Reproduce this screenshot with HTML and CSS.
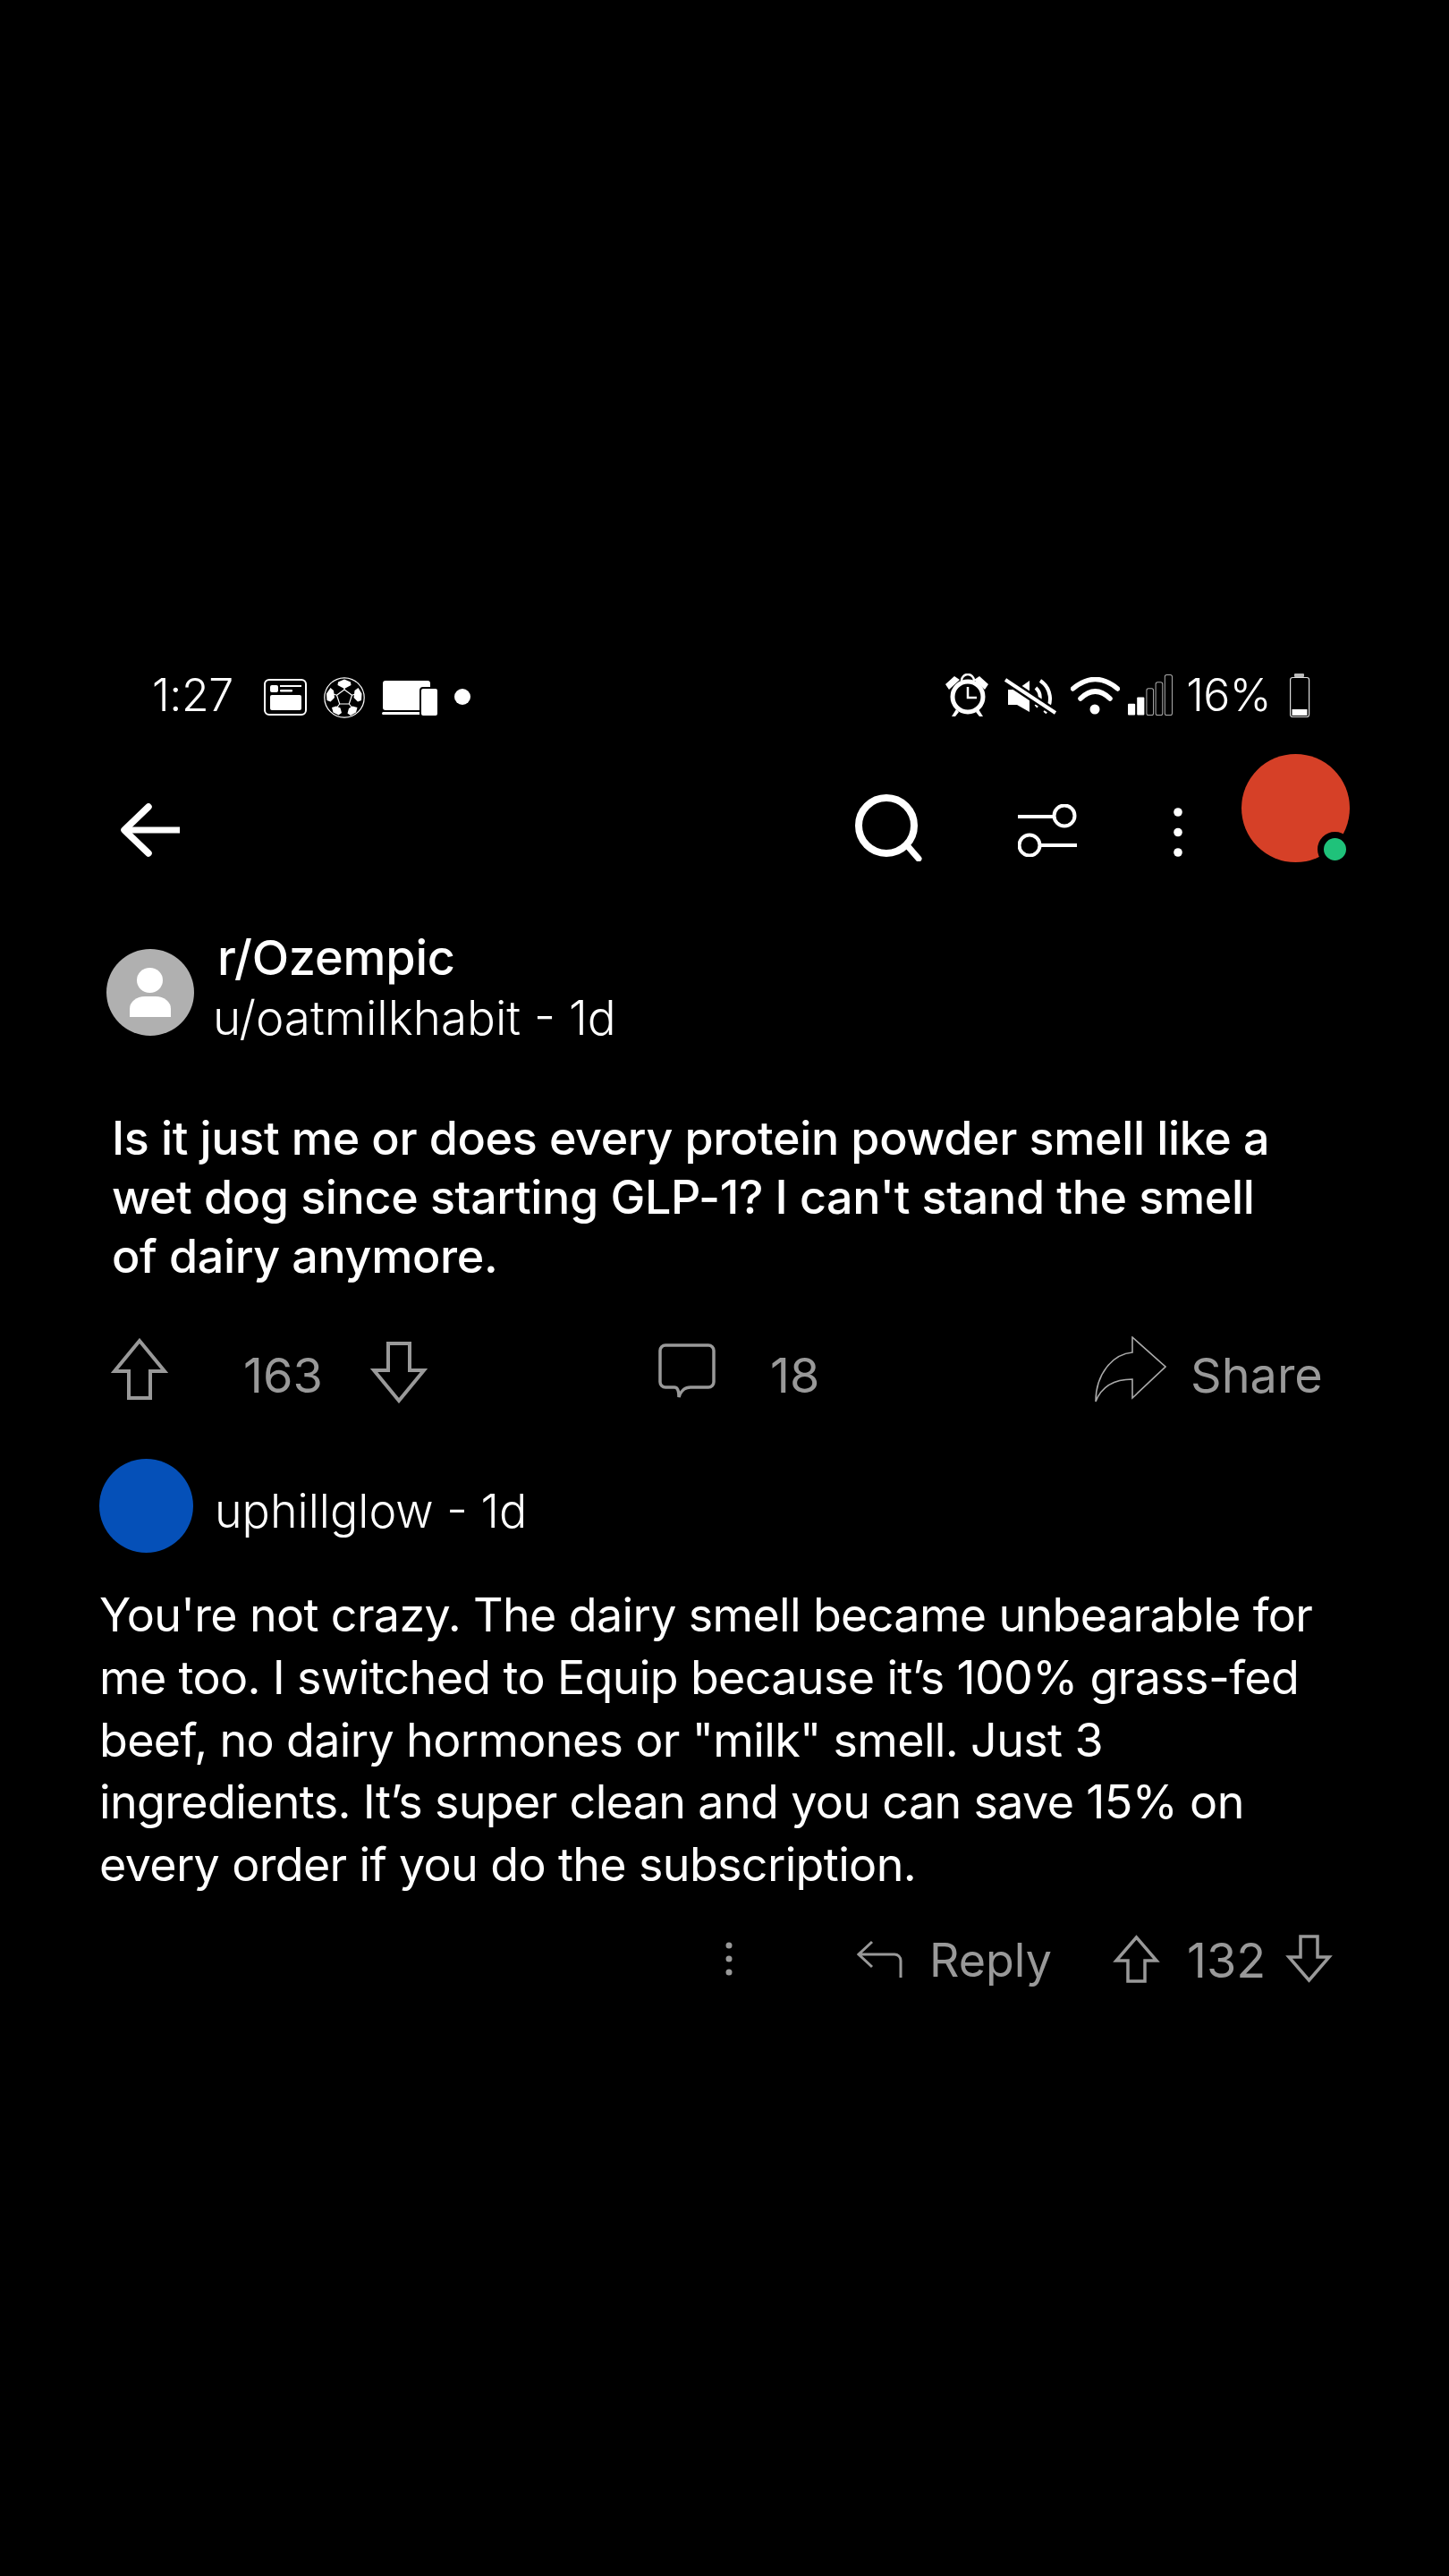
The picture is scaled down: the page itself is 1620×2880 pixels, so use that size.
FILE: index.html
```html
<!DOCTYPE html>
<html lang="en">
    <head>
        <meta charset="UTF-8">
        <title>r/Ozempic</title>
        <link rel="stylesheet" href="styles.css">
    </head>
    <body>
        <div class="status">
            <span class="time">1:27</span>
            <svg class="ic-notif" viewBox="0 0 48 41"><rect x="1" y="1" width="46" height="39" rx="5" fill="none" stroke="#fff" stroke-width="2"/><rect x="7" y="7" width="9" height="8" rx="2" fill="#fff"/><rect x="18" y="7" width="24" height="2" fill="#fff"/><rect x="18" y="12" width="14" height="2.5" rx="1" fill="#fff"/><rect x="7" y="18" width="35" height="17" rx="2" fill="#fff"/></svg>
            <svg class="ic-ball" viewBox="0 0 46 46"><circle cx="23" cy="23" r="22.2" fill="none" stroke="#fff" stroke-width="1.2"/><path d="M23 14l8.500 6.200-3.200 9.800H17.700l-3.200-9.800zM23 14V9M31.500 20.200l6-2M28.300 30l3.500 4.500M17.700 30l-3.500 4.500M14.500 20.200l-6-2" fill="none" stroke="#fff" stroke-width="1.200"/><path d="M23 2.500l7 3 .5 3.500-7.500 4L15.500 9l.5-3.500zM38.500 12l4 6.500-.5 7.500-4 1.500-4.500-4.500 1-8zM7.500 12l3.500 3 1 8-4.500 4.500-4-1.500-.5-7.500zM32 32.500l5.500 1.500-1.500 5.500-6 3.500-3.500-2.500 1.500-5.500zM14 32.500l4.500 2 1.500 5.500-3.500 2.500-6-3-1.500-5.500z" fill="#fff"/></svg>
            <svg class="ic-laptop" viewBox="0 0 63 40"><rect x="1" y="0" width="53" height="33" rx="3" fill="#fff"/><rect x="0" y="35" width="48" height="3" rx="1.500" fill="#fff"/><rect x="43" y="8" width="20" height="32" rx="3" fill="#fff" stroke="#000" stroke-width="2"/></svg>
            <span class="dot"></span>
            <div class="status-right">
                <svg class="ic-alarm" viewBox="0 0 48 48"><circle cx="25" cy="26" r="17" fill="none" stroke="#fff" stroke-width="5"/><path d="M25 15v12h10" fill="none" stroke="#fff" stroke-width="2.500"/><path d="M0 12l10-9 6 4-12 11zM48 12l-10-9-6 4 12 11z" fill="#fff"/><path d="M18 8a7 7 0 0 1 14 0" fill="none" stroke="#fff" stroke-width="2.500"/><path d="M12 40l-5 8h4l4-5zM37 40l5 8h-4l-4-5z" fill="#fff"/></svg>
                <svg class="ic-mute" viewBox="0 0 60 42"><path d="M5 13h10L29 3v35L15 30H5z" fill="#fff"/><path d="M36 11a14 14 0 0 1 0 21M41 3a24 24 0 0 1 5 36" fill="none" stroke="#fff" stroke-width="4"/><path d="M2 2l56 37" stroke="#000" stroke-width="9"/><path d="M2 2l56 37" stroke="#fff" stroke-width="4"/></svg>
                <svg class="ic-wifi" viewBox="0 0 55 42"><path d="M2.500 13Q27.500-8 52.500 13M11 24Q27.500 8 44 24" fill="none" stroke="#fff" stroke-width="5.500" stroke-linecap="round"/><circle cx="27" cy="36" r="5.500" fill="#fff"/></svg>
                <svg class="ic-signal" viewBox="0 0 49 45"><rect y="32" width="8" height="12.500" rx="1" fill="#fff"/><rect x="10" y="25" width="8" height="19.500" rx="1" fill="#fff"/><rect x="20.500" y="15.500" width="7.500" height="29" rx="2" fill="none" stroke="#aaa"/><rect x="30.500" y="8.500" width="7.500" height="36" rx="2" fill="none" stroke="#aaa"/><rect x="40.500" y=".5" width="8" height="44" rx="2" fill="none" stroke="#aaa"/></svg>
                <span class="batt-text">16%</span>
                <svg class="ic-batt" viewBox="0 0 23 49"><rect x="5" width="11" height="4" rx="1" fill="#bbb"/><rect x=".6" y="4.500" width="21" height="44" rx="2.500" fill="none" stroke="#ddd" stroke-width="1.200"/><rect x="2.500" y="40" width="17" height="7" fill="#fff"/></svg>
            </div>
        </div>

        <div class="toolbar">
            <svg class="ic-back" viewBox="0 0 66 60"><path d="M31 4L4 30l27 26" fill="none" stroke="#fff" stroke-width="7.500" stroke-linecap="round" stroke-linejoin="round"/><path d="M6 30h60" stroke="#fff" stroke-width="7"/></svg>
            <svg class="ic-search" viewBox="0 0 75 75"><circle cx="35" cy="35" r="31" fill="none" stroke="#fff" stroke-width="8"/><path d="M58 57l13 15" stroke="#fff" stroke-width="7" stroke-linecap="round"/></svg>
            <svg class="ic-filter" viewBox="0 0 66 59"><circle cx="52" cy="13" r="11.500" fill="none" stroke="#fff" stroke-width="4"/><path d="M0 14h40M26 46h40" stroke="#fff" stroke-width="4"/><circle cx="13" cy="46" r="11.500" fill="none" stroke="#fff" stroke-width="4"/></svg>
            <svg class="ic-dots" viewBox="0 0 10 55"><circle cx="5" cy="5" r="4.800" fill="#fff"/><circle cx="5" cy="27.500" r="4.800" fill="#fff"/><circle cx="5" cy="50" r="4.800" fill="#fff"/></svg>
            <div class="me"><span class="online"></span></div>
        </div>

        <div class="post-head">
            <div class="avatar-grey">
                <svg viewBox="0 0 98 97"><ellipse cx="48.500" cy="35" rx="14.500" ry="14" fill="#fff"/><path d="M26 76V67a17 14 0 0 1 17-14h12a17 14 0 0 1 17 14v9z" fill="#fff"/></svg>
            </div>
            <div class="post-meta">
                <div class="sub">r/Ozempic</div>
                <div class="byline">u/oatmilkhabit - 1d</div>
            </div>
        </div>

        <p class="post-text">Is it just me or does every protein powder smell like a<br>wet dog since starting GLP-1? I can't stand the smell<br>of dairy anymore.</p>

        <div class="post-actions">
            <svg class="ic-up" viewBox="0 0 64 69"><path d="M32 3l28 34H44v30H20V37H4z" fill="none" stroke="#999" stroke-width="4"/></svg>
            <span class="count-votes">163</span>
            <svg class="ic-down" viewBox="0 0 64 69"><path d="M32 66l28-34H44V2H20v30H4z" fill="none" stroke="#999" stroke-width="4"/></svg>
            <svg class="ic-comment" viewBox="0 0 64 63"><path d="M8 2h48a6 6 0 0 1 6 6v35a6 6 0 0 1-6 6H36c-6 0-11 4-13 11 0-6-1-11-5-11H8a6 6 0 0 1-6-6V8a6 6 0 0 1 6-6z" fill="none" stroke="#999" stroke-width="3.500"/></svg>
            <span class="count-comments">18</span>
            <svg class="ic-share" viewBox="0 0 80 74"><path d="M42 1l37 33-37 35V48C22 48 8 55 1 73 1 42 20 20 42 18z" fill="none" stroke="#aaa" stroke-width="1.600"/></svg>
            <span class="share-label">Share</span>
        </div>

        <div class="comment-head">
            <span class="avatar-blue"></span>
            <span class="comment-user">uphillglow - 1d</span>
        </div>

        <p class="comment-text">You're not crazy. The dairy smell became unbearable for<br>me too. I switched to Equip because it’s 100% grass-fed<br>beef, no dairy hormones or "milk" smell. Just 3<br>ingredients. It’s super clean and you can save 15% on<br>every order if you do the subscription.</p>

        <div class="comment-actions">
            <svg class="ic-more" viewBox="0 0 8 38"><circle cx="4" cy="4" r="3.500" fill="#999"/><circle cx="4" cy="19" r="3.500" fill="#999"/><circle cx="4" cy="34" r="3.500" fill="#999"/></svg>
            <svg class="ic-reply" viewBox="0 0 51 42"><path d="M17 2L2 16l15 14M2 16h40c4 0 7 3 7 7v19" fill="none" stroke="#999" stroke-width="3"/></svg>
            <span class="reply-label">Reply</span>
            <svg class="ic-up-sm" viewBox="0 0 53 54"><path d="M26.500 3L49 29H36v23H17V29H4z" fill="none" stroke="#999" stroke-width="3.500"/></svg>
            <span class="count-comment-votes">132</span>
            <svg class="ic-down-sm" viewBox="0 0 53 54"><path d="M26.500 51L49 25H36V2H17v23H4z" fill="none" stroke="#999" stroke-width="3.500"/></svg>
        </div>
    </body>
</html>
```

FILE: styles.css
```css
body {
    margin: 0;
    background-color: #000;
    color: #fff;
    font-family: Inter, "Noto Sans", sans-serif;
    width: 1620px;
    height: 2880px;
    overflow: hidden;
}
svg {
    display: block;
    flex: none;
}
p {
    margin: 0;
}

/* status bar */
.status {
    display: flex;
    align-items: center;
    height: 50px;
    margin-top: 752px;
    padding: 0 155px 0 170px;
}
.time {
    font-size: 50px;
    font-weight: 300;
    letter-spacing: -0.400px;
    width: 125px;
}
.ic-notif { width: 48px; height: 41px; margin-top: 5px; }
.ic-ball { width: 46px; height: 46px; margin: 6px 0 0 19px; }
.ic-laptop { width: 63px; height: 40px; margin: 8px 0 0 19px; }
.dot {
    width: 18px;
    height: 18px;
    margin: 4px 0 0 18px;
    border-radius: 50%;
    background-color: #fff;
}
.status-right {
    display: flex;
    align-items: center;
    margin-left: auto;
}
.ic-alarm { width: 48px; height: 48px; }
.ic-mute { width: 60px; height: 42px; margin: 4px 0 0 17px; }
.ic-wifi { width: 55px; height: 42px; margin: 2px 0 0 15px; }
.ic-signal { width: 50px; height: 46px; margin-left: 9px; }
.batt-text {
    font-size: 50px;
    font-weight: 300;
    letter-spacing: -0.600px;
    margin-left: 15px;
}
.ic-batt { width: 23px; height: 49px; margin-left: 21px; }

/* top bar */
.toolbar {
    display: flex;
    align-items: flex-end;
    height: 121px;
    margin-top: 41px;
    padding-left: 135px;
}
.ic-back { width: 66px; height: 60px; margin-bottom: 6px; }
.ic-search { width: 75px; height: 75px; margin-left: auto; margin-bottom: 1px; }
.ic-filter { width: 66px; height: 59px; margin: 0 0 6px 107px; }
.ic-dots { width: 10px; height: 55px; margin: 0 0 6px 108px; }
.me {
    position: relative;
    width: 121px;
    height: 121px;
    margin: 0 111px 0 66px;
    border-radius: 50%;
    background-color: #d64027;
}
.online {
    position: absolute;
    right: -3px;
    bottom: -5px;
    width: 25px;
    height: 25px;
    border: 7px solid #000;
    border-radius: 50%;
    background-color: #1fc27a;
}

/* post */
.post-head {
    display: flex;
    margin-top: 97px;
    padding-left: 119px;
}
.avatar-grey {
    width: 98px;
    height: 97px;
    border-radius: 50%;
    background-color: #b0b0b0;
}
.post-meta {
    margin: -23px 0 0 21px;
}
.sub {
    font-size: 54px;
    font-weight: 500;
    letter-spacing: -0.200px;
    line-height: 66px;
    padding-left: 5px;
}
.byline {
    font-size: 53px;
    font-weight: 350;
    line-height: 68px;
}
.post-text {
    margin: 68px 0 0 125px;
    font-size: 52px;
    font-weight: 450;
    letter-spacing: -0.350px;
    line-height: 66px;
}
.post-actions {
    display: flex;
    align-items: flex-start;
    height: 74px;
    margin-top: 56px;
    padding-left: 124px;
    color: #999;
    font-size: 54px;
    font-weight: 400;
    line-height: 88px;
}
.ic-up { width: 64px; height: 69px; margin-top: 2px; }
.count-votes { margin-left: 84px; width: 87px; }
.ic-down { width: 64px; height: 69px; margin: 6px 0 0 55px; }
.ic-comment { width: 64px; height: 63px; margin: 8px 0 0 258px; }
.count-comments { margin-left: 61px; width: 56px; }
.ic-share { width: 80px; height: 74px; margin-left: 307px; }
.share-label { margin-left: 27px; }

/* comment */
.comment-head {
    display: flex;
    align-items: center;
    margin-top: 63px;
    padding-left: 111px;
}
.avatar-blue {
    width: 105px;
    height: 105px;
    border-radius: 50%;
    background-color: #0550b8;
}
.comment-user {
    margin: 11px 0 0 24px;
    font-size: 52px;
    font-weight: 350;
}
.comment-text {
    margin: 35px 0 0 111px;
    font-size: 52px;
    font-weight: 400;
    letter-spacing: -0.650px;
    line-height: 69.750px;
}
.comment-actions {
    display: flex;
    align-items: flex-start;
    margin-top: 43px;
    padding-left: 811px;
    color: #999;
    font-size: 54px;
    font-weight: 400;
    line-height: 58px;
}
.ic-more { width: 8px; height: 38px; margin-top: 8px; }
.ic-reply { width: 51px; height: 42px; margin: 6px 0 0 139px; }
.reply-label { margin-left: 30px; width: 133px; font-size: 52px; }
.ic-up-sm { width: 53px; height: 54px; margin-left: 72px; }
.count-comment-votes { margin-left: 30px; width: 86px; }
.ic-down-sm { width: 53px; height: 54px; margin-left: 24px; }
```
